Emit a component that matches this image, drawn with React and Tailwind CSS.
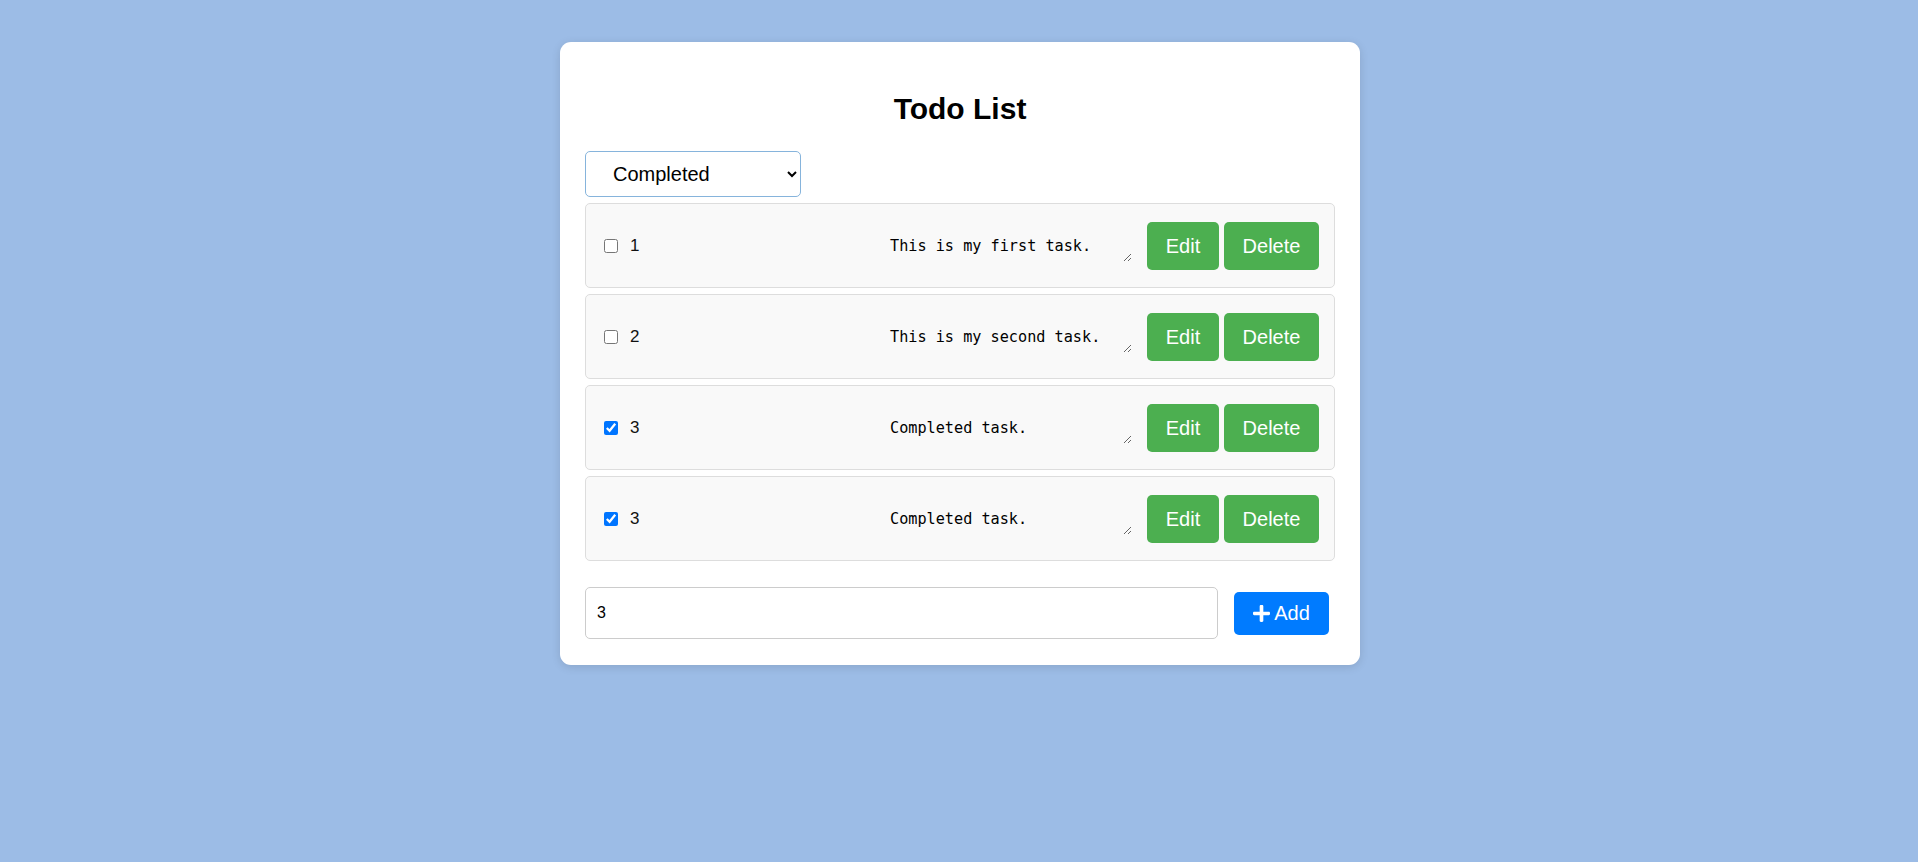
import React from "react";

const todos = [
  { id: 1, label: "1", text: "This is my first task.", done: false },
  { id: 2, label: "2", text: "This is my second task.", done: false },
  { id: 3, label: "3", text: "Completed task.", done: true },
  { id: 4, label: "3", text: "Completed task.", done: true },
];

function PlusIcon() {
  return (
    <svg width="17" height="17" viewBox="0 32 448 448" fill="currentColor" aria-hidden="true">
      <path d="M416 208H272V64c0-17.67-14.33-32-32-32h-32c-17.67 0-32 14.33-32 32v144H32c-17.67 0-32 14.33-32 32v32c0 17.67 14.33 32 32 32h144v144c0 17.670 14.33 32 32 32h32c17.67 0 32-14.33 32-32V304h144c17.67 0 32-14.33 32-32v-32c0-17.67-14.33-32-32-32z" />
    </svg>
  );
}

function Row({ todo }) {
  return (
    <div className="flex items-center h-[85px] bg-[#f9f9f9] border border-[#dddddd] rounded-[5px] pl-[18px] pr-[15px]">
      <div className="flex items-center flex-1">
        <input type="checkbox" defaultChecked={todo.done} className="w-[14px] h-[14px]" />
        <span className="ml-[12px] text-[17px] text-[#111] font-['Liberation_Sans',Arial,sans-serif]">{todo.label}</span>
      </div>
      <textarea
        rows={1}
        defaultValue={todo.text}
        className="w-[244px] h-[27px] mt-[5px] mr-[15px] px-[2px] pt-[2px] bg-transparent border-0 outline-none text-[15.2px] leading-[18px] text-black font-['DejaVu_Sans_Mono',monospace] overflow-hidden"
      />
      <div className="flex items-center gap-[5px]">
        <button className="h-[48px] w-[72px] bg-[#4caf50] text-white text-[20px] rounded-[5px] font-['Liberation_Sans',Arial,sans-serif]">
          Edit
        </button>
        <button className="h-[48px] w-[95px] bg-[#4caf50] text-white text-[20px] rounded-[5px] font-['Liberation_Sans',Arial,sans-serif]">
          Delete
        </button>
      </div>
    </div>
  );
}

export default function App() {
  return (
    <div className="min-h-[862px] bg-[#9cbce6] pt-[42px] pl-[2px] font-['Liberation_Sans',Arial,sans-serif]">
      <div className="mx-auto w-[800px] bg-white rounded-[11px] shadow-[0_2px_10px_rgba(0,0,0,0.12)] px-[25px] pt-[25px] pb-[26px]">
        <h1 className="text-center text-[30px] font-bold text-black mt-[25px] mb-[26px] leading-[33px]">
          Todo List
        </h1>
        <select
          defaultValue="completed"
          className="block w-[216px] h-[46px] border border-[#86b4dc] rounded-[5px] pl-[23px] pr-[6px] text-[20px] text-black bg-white"
        >
          <option value="all">All</option>
          <option value="completed">Completed</option>
          <option value="active">Active</option>
        </select>
        <div className="mt-[6px] flex flex-col gap-[6px]">
          {todos.map((t) => (
            <Row key={t.id} todo={t} />
          ))}
        </div>
        <div className="mt-[26px] flex items-center">
          <input
            type="text"
            defaultValue="3"
            className="w-[633px] h-[52px] border border-[#cccccc] rounded-[5px] pl-[11px] text-[16px] text-black bg-white outline-none"
          />
          <button className="ml-[16px] w-[95px] h-[43px] bg-[#007bff] text-white text-[20px] rounded-[5px] flex items-center justify-center gap-[4px]">
            <PlusIcon />
            <span>Add</span>
          </button>
        </div>
      </div>
    </div>
  );
}
